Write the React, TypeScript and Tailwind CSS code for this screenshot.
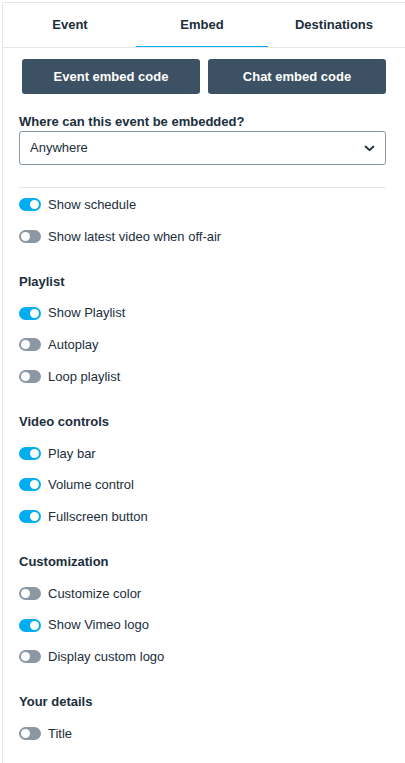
import React, { useState } from "react";

const TABS = ['Event', 'Embed', 'Destinations'];

type Item = { label: string; on: boolean };

const SECTIONS: { title?: string; items: Item[] }[] = [
  {
    title: 'Playlist',
    items: [
      { label: 'Show Playlist', on: true },
      { label: 'Autoplay', on: false },
      { label: 'Loop playlist', on: false },
    ],
  },
  {
    title: 'Video controls',
    items: [
      { label: 'Play bar', on: true },
      { label: 'Volume control', on: true },
      { label: 'Fullscreen button', on: true },
    ],
  },
  {
    title: 'Customization',
    items: [
      { label: 'Customize color', on: false },
      { label: 'Show Vimeo logo', on: true },
      { label: 'Display custom logo', on: false },
    ],
  },
  {
    title: 'Your details',
    items: [{ label: 'Title', on: false }],
  },
];

function Toggle({ on }: { on: boolean }) {
  return (
    <span
      className={`relative inline-flex w-[22px] h-[13px] rounded-full shrink-0 ${on ? 'bg-[#00adef]' : 'bg-[#8b97a2]'}`}
    >
      <span
        className={`absolute top-[2px] w-[9px] h-[9px] rounded-full bg-white ${on ? 'left-[11px]' : 'left-[2px]'}`}
      />
    </span>
  );
}

function ToggleRow({ item }: { item: Item }) {
  return (
    <div className="h-[31.7px] flex items-center gap-[7px]">
      <Toggle on={item.on} />
      <span className="text-[13px] text-[#1a2e3b]">{item.label}</span>
    </div>
  );
}

export default function App() {
  const [tab] = useState('Embed');

  return (
    <div className="w-[405px] min-h-[763px] bg-white pt-[2px] pl-[2px] font-['Liberation_Sans',Arial,sans-serif]">
      <div className="min-h-[761px] border-t border-l border-[#e4e7e9]">
        {/* Tabs */}
        <div className="pl-[1px] border-b border-[#e4e7e9]">
          <div className="grid grid-cols-3 w-[396px]">
            {TABS.map(t => (
              <div
                key={t}
                className={`h-[44px] flex items-center justify-center text-[13px] font-bold text-[#1a2e3b] ${
                  t === tab ? 'border-b border-[#00adef] -mb-px' : ''
                }`}
              >
                {t}
              </div>
            ))}
          </div>
        </div>

        <div className="pl-[16px] pr-[19px]">
          {/* Embed code buttons */}
          <div className="flex gap-[8px] pl-[3px] mt-[11px]">
            <button className="flex-1 h-[35px] rounded-[3px] bg-[#3c5163] text-white text-[13px] font-bold">
              Event embed code
            </button>
            <button className="flex-1 h-[35px] rounded-[3px] bg-[#3c5163] text-white text-[13px] font-bold">
              Chat embed code
            </button>
          </div>

          {/* Where embedded */}
          <div className="mt-[20px] text-[13px] font-bold text-[#1a2e3b] leading-[16px]">
            Where can this event be embedded?
          </div>
          <div className="mt-[1px] h-[34px] border border-[#8c99a4] rounded-[3px] flex items-center justify-between pl-[10px] pr-[10px]">
            <span className="text-[13px] text-[#1a2e3b]">Anywhere</span>
            <svg width="11" height="7" viewBox="0 0 11 7" fill="none">
              <path d="M1.5 1.5L5.5 5.2L9.5 1.5" stroke="#1a2e3b" strokeWidth="1.8" strokeLinecap="round" strokeLinejoin="round" />
            </svg>
          </div>

          <div className="mt-[22px] border-t border-[#e4e7e9]" />

          <div className="mt-[1px]">
            <ToggleRow item={{ label: 'Show schedule', on: true }} />
            <ToggleRow item={{ label: 'Show latest video when off-air', on: false }} />
          </div>

          {SECTIONS.map(section => (
            <div key={section.title} className="mt-[13px]">
              <div className="h-[32px] flex items-center text-[13px] font-bold text-[#1a2e3b]">
                {section.title}
              </div>
              {section.items.map(item => (
                <ToggleRow key={item.label} item={item} />
              ))}
            </div>
          ))}
        </div>
      </div>
    </div>
  );
}
